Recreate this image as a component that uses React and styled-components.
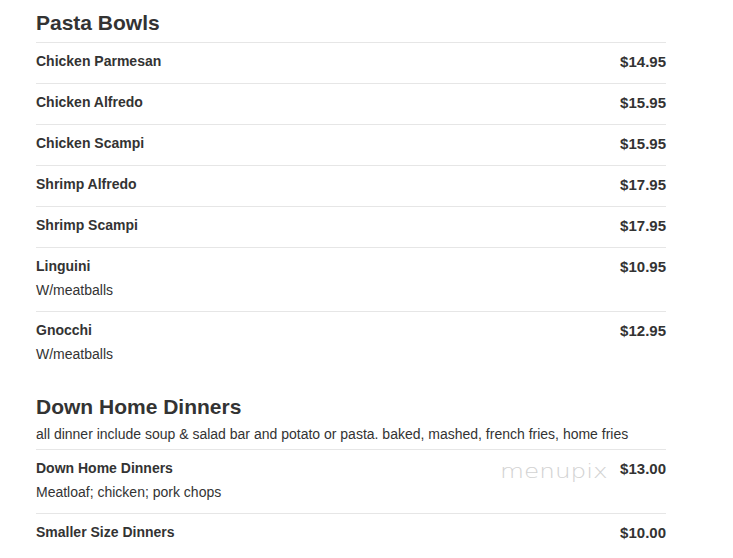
import React from "react";
import styled, { createGlobalStyle } from "styled-components";

const Global = createGlobalStyle`
  html, body { margin: 0; padding: 0; background: #fff; }
  body { font-family: "Liberation Sans", Arial, sans-serif; color: #333; }
`;

const Page = styled.div`
  width: 630px;
  padding: 10px 0 0 36px;
  position: relative;
`;

const Section = styled.section`
  margin-bottom: 19px;
`;

const Heading = styled.h2`
  margin: 0 0 ${(p) => (p.$hasSub ? "5px" : "7px")};
  font-size: 21px;
  line-height: 25px;
  font-weight: bold;
  color: #333;
`;

const Sub = styled.p`
  margin: 0 0 4px;
  font-size: 14px;
  line-height: 21px;
  color: #333;
`;

const Item = styled.div`
  display: flex;
  justify-content: space-between;
  align-items: flex-start;
  border-top: 1px solid #e6e6e6;
  padding: 8px 0;
  position: relative;
`;

const Info = styled.div`
  display: flex;
  flex-direction: column;
`;

const Name = styled.div`
  font-size: 14px;
  line-height: 21px;
  font-weight: bold;
  margin-bottom: 3px;
`;

const Desc = styled.div`
  font-size: 14px;
  line-height: 21px;
  margin-bottom: 2px;
`;

const Price = styled.div`
  font-size: 15px;
  line-height: 21px;
  font-weight: bold;
`;

const Watermark = styled.div`
  position: absolute;
  left: 464px;
  top: 10px;
  font-family: "DejaVu Sans", sans-serif;
  font-weight: 200;
  font-size: 19px;
  line-height: 22px;
  color: #d2d2d2;
  transform: scaleX(1.3);
  transform-origin: left top;
  pointer-events: none;
`;

const sections = [
  {
    title: "Pasta Bowls",
    items: [
      { name: "Chicken Parmesan", price: "$14.95" },
      { name: "Chicken Alfredo", price: "$15.95" },
      { name: "Chicken Scampi", price: "$15.95" },
      { name: "Shrimp Alfredo", price: "$17.95" },
      { name: "Shrimp Scampi", price: "$17.95" },
      { name: "Linguini", desc: "W/meatballs", price: "$10.95" },
      { name: "Gnocchi", desc: "W/meatballs", price: "$12.95" },
    ],
  },
  {
    title: "Down Home Dinners",
    sub: "all dinner include soup & salad bar and potato or pasta. baked, mashed, french fries, home fries",
    items: [
      { name: "Down Home Dinners", desc: "Meatloaf; chicken; pork chops", price: "$13.00", mark: true },
      { name: "Smaller Size Dinners", price: "$10.00" },
    ],
  },
];

export default function App() {
  return (
    <>
      <Global />
      <Page>
        {sections.map((s) => (
          <Section key={s.title}>
            <Heading $hasSub={!!s.sub}>{s.title}</Heading>
            {s.sub && <Sub>{s.sub}</Sub>}
            {s.items.map((it) => (
              <Item key={it.name}>
                <Info>
                  <Name>{it.name}</Name>
                  {it.desc && <Desc>{it.desc}</Desc>}
                </Info>
                <Price>{it.price}</Price>
                {it.mark && <Watermark>menupix</Watermark>}
              </Item>
            ))}
          </Section>
        ))}
      </Page>
    </>
  );
}
